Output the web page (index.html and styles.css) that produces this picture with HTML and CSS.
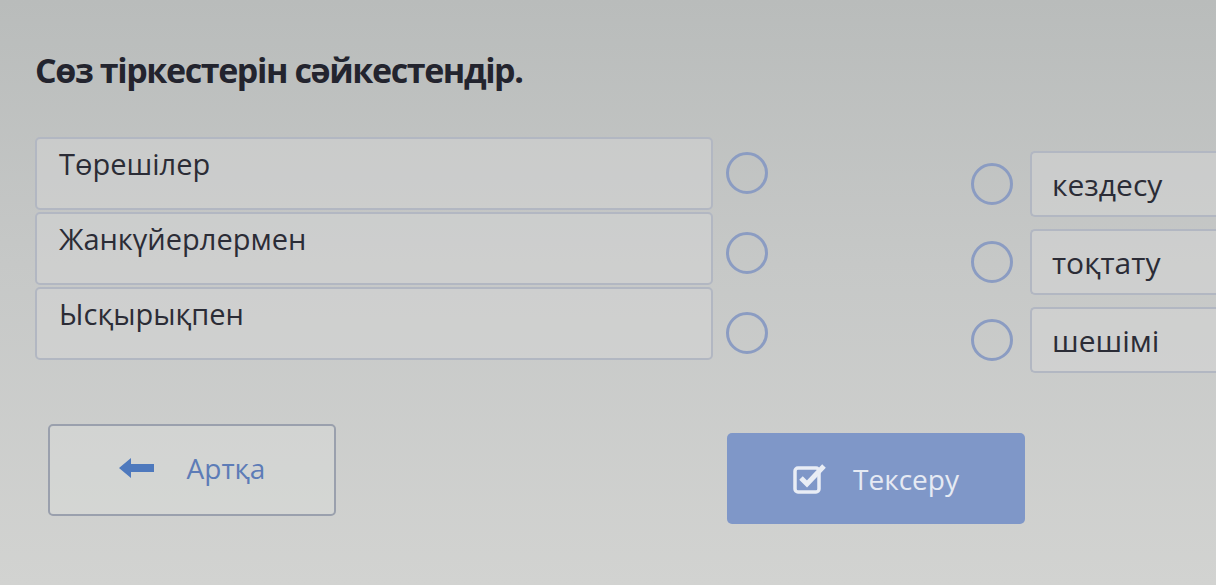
FILE: index.html
```
<!DOCTYPE html>
<html lang="kk">
<head>
    <meta charset="UTF-8">
    <meta name="viewport" content="width=device-width, initial-scale=1.0">
    <title>Сөз тіркестерін сәйкестендір</title>
    <link rel="stylesheet" href="styles.css">
</head>
<body>
    <div class="page">
        <h1 class="task-title">Сөз тіркестерін сәйкестендір.</h1>

        <!-- Matching area -->
        <div class="match">
            <div class="left-words">
                <div class="word-box left-box">Төрешілер</div>
                <div class="word-box left-box">Жанкүйерлермен</div>
                <div class="word-box left-box">Ысқырықпен</div>
            </div>
            <div class="left-dots">
                <span class="dot"></span>
                <span class="dot"></span>
                <span class="dot"></span>
            </div>
            <div class="match-right">
                <div class="right-row">
                    <span class="dot"></span>
                    <div class="word-box right-box">кездесу</div>
                </div>
                <div class="right-row">
                    <span class="dot"></span>
                    <div class="word-box right-box">тоқтату</div>
                </div>
                <div class="right-row">
                    <span class="dot"></span>
                    <div class="word-box right-box">шешімі</div>
                </div>
            </div>
        </div>

        <!-- Buttons -->
        <div class="actions">
            <button class="btn btn-back">
                <svg class="btn-icon" width="36" height="22" viewBox="0 0 36 22">
                    <path d="M0 11 L12 1 L12 7 L35 7 L35 15 L12 15 L12 21 Z" fill="#4e79bd"/>
                </svg>
                <span>Артқа</span>
            </button>
            <button class="btn btn-check">
                <svg class="btn-icon" width="34" height="32" viewBox="0 0 34 32">
                    <rect x="2" y="5" width="24" height="24" rx="3" fill="none" stroke="#e9edf5" stroke-width="3.5"/>
                    <path d="M8 15 L14 21 L31 3" fill="none" stroke="#e9edf5" stroke-width="5"/>
                </svg>
                <span>Тексеру</span>
            </button>
        </div>
    </div>
</body>
</html>
```

FILE: styles.css
```
body {
    margin: 0;
    padding: 0;
    font-family: "Open Sans", "Noto Sans", sans-serif;
    background: linear-gradient(to bottom, #b9bcbb 0%, #c6c8c7 45%, #d2d3d1 100%);
    color: #2b2c36;
    width: 1216px;
    height: 585px;
    overflow: hidden;
}
.page {
    padding: 50px 0 0 35px;
}
.task-title {
    margin: 0 0 47px;
    font-size: 34px;
    font-weight: 700;
    letter-spacing: -1.4px;
    color: #23242e;
    line-height: 40px;
}
.match {
    display: flex;
    align-items: flex-start;
}
.left-words {
    display: flex;
    flex-direction: column;
    gap: 2px;
}
.left-dots {
    display: flex;
    flex-direction: column;
    gap: 38px;
    margin: 15px 0 0 13px;
}
.match-right {
    display: flex;
    flex-direction: column;
    gap: 12px;
    margin-left: 203px;
    padding-top: 14px;
}
.right-row {
    display: flex;
    align-items: center;
    gap: 17px;
    height: 66px;
}
.word-box {
    box-sizing: border-box;
    border: 2px solid #b2b7c2;
    border-radius: 5px;
    background: rgba(214, 216, 215, 0.45);
    font-size: 29px;
}
.left-box {
    width: 678px;
    height: 73px;
    padding: 5px 0 0 22px;
}
.right-box {
    width: 220px;
    height: 100%;
    display: flex;
    align-items: center;
    padding-left: 20px;
    font-size: 30px;
    border-right: none;
    border-radius: 5px 0 0 5px;
}
.dot {
    box-sizing: border-box;
    width: 42px;
    height: 42px;
    border: 3px solid #8b9cc2;
    border-radius: 50%;
    flex-shrink: 0;
}
.actions {
    display: flex;
    align-items: flex-start;
    margin-top: 51px;
}
.btn {
    box-sizing: border-box;
    display: flex;
    align-items: center;
    justify-content: center;
    gap: 32px;
    border-radius: 5px;
    font-family: "Open Sans", "Noto Sans", sans-serif;
    font-size: 28px;
    cursor: pointer;
}
.btn-back {
    width: 288px;
    height: 92px;
    margin-left: 13px;
    background: rgba(220, 222, 220, 0.4);
    border: 2px solid #9aa0ad;
    color: #5d7cb7;
    padding-bottom: 6px;
}
.btn-check {
    width: 298px;
    height: 91px;
    margin-left: 391px;
    margin-top: 9px;
    background-color: #7f97c8;
    border: none;
    color: #e6eaf3;
    gap: 26px;
}
.btn-icon {
    flex-shrink: 0;
}
```
